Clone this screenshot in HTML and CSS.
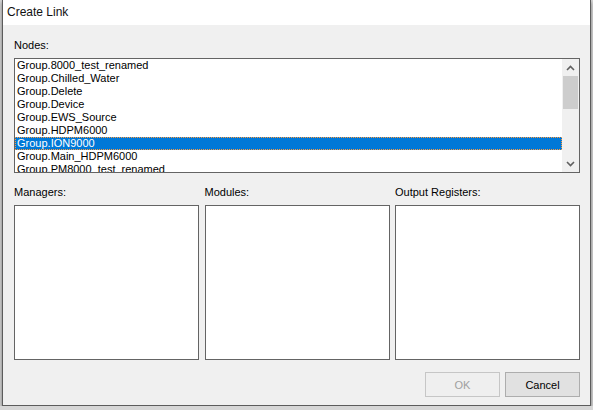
FILE: index.html
```html
<!DOCTYPE html>
<html>
    <head>
        <meta charset="utf-8">
        <title>Create Link</title>
        <link rel="stylesheet" href="styles.css">
    </head>
    <body>
        <div class="dialog">
            <div class="titlebar">Create Link</div>
            <div class="client">
                <div class="label">Nodes:</div>
                <div class="listbox">
                    <div class="items">
                        <div class="item">Group.8000_test_renamed</div>
                        <div class="item">Group.Chilled_Water</div>
                        <div class="item">Group.Delete</div>
                        <div class="item">Group.Device</div>
                        <div class="item">Group.EWS_Source</div>
                        <div class="item">Group.HDPM6000</div>
                        <div class="item selected">Group.ION9000</div>
                        <div class="item">Group.Main_HDPM6000</div>
                        <div class="item">Group.PM8000_test_renamed</div>
                    </div>
                    <div class="scrollbar">
                        <div class="arrow">
                            <svg width="9" height="6" viewBox="0 0 9 6"><path d="M1 5 L4.5 1.5 L8 5" fill="none" stroke="#606060" stroke-width="1.6"/></svg>
                        </div>
                        <div class="thumb"></div>
                        <div class="track"></div>
                        <div class="arrow">
                            <svg width="9" height="6" viewBox="0 0 9 6"><path d="M1 1 L4.5 4.5 L8 1" fill="none" stroke="#606060" stroke-width="1.6"/></svg>
                        </div>
                    </div>
                </div>

                <div class="panels">
                    <div class="panel">
                        <div class="label">Managers:</div>
                        <div class="box"></div>
                    </div>
                    <div class="panel">
                        <div class="label">Modules:</div>
                        <div class="box"></div>
                    </div>
                    <div class="panel">
                        <div class="label">Output Registers:</div>
                        <div class="box"></div>
                    </div>
                </div>

                <div class="buttons">
                    <button class="btn" disabled>OK</button>
                    <button class="btn">Cancel</button>
                </div>
            </div>
        </div>
    </body>
</html>
```

FILE: styles.css
```css
*{
    padding: 0;
    margin: 0;
    box-sizing: border-box;
}
body{
    background: #d6d6d6;
    font-family: "Liberation Sans", Arial, sans-serif;
    font-size: 11px;
    color: #000;
    overflow: hidden;
}
.dialog{
    width: 589px;
    height: 406px;
    margin-left: 2px;
    background: #f0f0f0;
    border: 1px solid #5c5c5c;
    border-top: none;
    box-shadow: 0 2px 4px rgba(0, 0, 0, 0.45);
}
.titlebar{
    height: 25px;
    line-height: 25px;
    padding-left: 4px;
    background: #fff;
    font-size: 12px;
    color: #111;
}
.client{
    padding: 14px 10px 0 11px;
}
.label{
    height: 13px;
    line-height: 13px;
    margin-bottom: 6px;
}
.listbox{
    display: flex;
    height: 115px;
    background: #fff;
    border: 1px solid #646464;
    overflow: hidden;
}
.items{
    flex: 1;
}
.item{
    height: 13px;
    line-height: 13px;
    padding-left: 2px;
    white-space: nowrap;
}
.item.selected{
    background: #0078d7;
    color: #fff;
    outline: 1px dotted #ff9a3c;
    outline-offset: -1px;
}
.scrollbar{
    width: 17px;
    display: flex;
    flex-direction: column;
    background: #f0f0f0;
}
.arrow{
    height: 17px;
    display: flex;
    align-items: center;
    justify-content: center;
}
.thumb{
    height: 33px;
    margin: 0 1px;
    background: #cdcdcd;
}
.track{
    flex: 1;
}
.panels{
    display: flex;
    justify-content: space-between;
    margin-top: 13px;
}
.panel{
    width: 185px;
}
.box{
    height: 155px;
    background: #fff;
    border: 1px solid #646464;
}
.buttons{
    display: flex;
    justify-content: flex-end;
    gap: 5px;
    margin-top: 12px;
}
.btn{
    width: 75px;
    height: 25px;
    font-family: "Liberation Sans", Arial, sans-serif;
    font-size: 11px;
    color: #000;
    background: #e1e1e1;
    border: 1px solid #adadad;
}
.btn:disabled{
    color: #a0a0a0;
    background: #efefef;
    border-color: #c6c6c6;
}
```
